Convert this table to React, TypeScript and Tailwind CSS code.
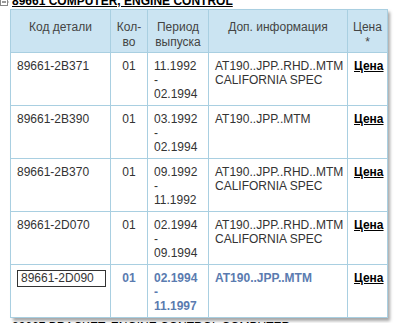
import React from 'react'

type Row = {
  code: string
  qty: string
  from: string
  to: string
  info: string[]
  active?: boolean
}

const rows: Row[] = [
  { code: '89661-2B371', qty: '01', from: '11.1992', to: '02.1994', info: ['AT190..JPP..RHD..MTM', 'CALIFORNIA SPEC'] },
  { code: '89661-2B390', qty: '01', from: '03.1992', to: '02.1994', info: ['AT190..JPP..MTM'] },
  { code: '89661-2B370', qty: '01', from: '09.1992', to: '11.1992', info: ['AT190..JPP..RHD..MTM', 'CALIFORNIA SPEC'] },
  { code: '89661-2D070', qty: '01', from: '02.1994', to: '09.1994', info: ['AT190..JPP..RHD..MTM', 'CALIFORNIA SPEC'] },
  { code: '89661-2D090', qty: '01', from: '02.1994', to: '11.1997', info: ['AT190..JPP..MTM'], active: true },
]

const TreeIcon = () => (
  <svg width="9" height="9" viewBox="0 0 9 9" className="shrink-0">
    <rect x="0.5" y="0.5" width="7" height="7" fill="white" stroke="#888" />
    <line x1="2" y1="4" x2="6" y2="4" stroke="#333" />
    <line x1="8" y1="4" x2="9" y2="4" stroke="#999" strokeDasharray="1 1" />
  </svg>
)

const App = () => {
  const th = 'border border-[#a9cfe1] font-normal text-[#444] text-center align-top px-[4px] pt-[10px] pb-[2px] leading-[15px]'
  const td = 'border border-[#a9cfe1] align-top pt-[6px] pb-[4px] leading-[14px]'

  return (
    <div className="w-[403px] h-[323px] overflow-hidden bg-white text-[12px] text-[#333]" style={{ fontFamily: '"Liberation Sans", Arial, sans-serif' }}>
      <div className="flex items-end gap-[3px] h-[8px] -mt-[1px] leading-[8px]">
        <div className="-mt-[4px]"><TreeIcon /></div>
        <span className="font-bold underline text-black leading-[8px] -translate-y-[2px]">89661 COMPUTER, ENGINE CONTROL</span>
      </div>

      <div className="ml-[10px] mt-[2px] w-[377px] shadow-[3px_3px_3px_rgba(0,0,0,0.35)]">
        <table className="w-[377px] border-collapse table-fixed">
          <colgroup>
            <col className="w-[100px]" />
            <col className="w-[37px]" />
            <col className="w-[61px]" />
            <col className="w-[139px]" />
            <col className="w-[40px]" />
          </colgroup>
          <thead>
            <tr className="bg-[#cbe4f2] h-[41px]">
              <th className={th}>Код детали</th>
              <th className={th}>Кол-<br />во</th>
              <th className={th}>Период выпуска</th>
              <th className={th}>Доп. информация</th>
              <th className={th}>Цена<br />*</th>
            </tr>
          </thead>
          <tbody>
            {rows.map((r, idx) => (
              <tr key={idx} className={r.active ? 'h-[52px]' : 'h-[52px]'}>
                <td className={`${td} pl-[6px]`}>
                  {r.active ? (
                    <div className="w-[89px] h-[17px] border border-[#333] pl-[3px] leading-[15px] -mt-[1px]">{r.code}</div>
                  ) : (
                    r.code
                  )}
                </td>
                <td className={`${td} text-center ${r.active ? 'font-bold text-[#5a7bb0]' : ''}`}>{r.qty}</td>
                <td className={`${td} pl-[6px] ${r.active ? 'font-bold text-[#5a7bb0]' : ''}`}>
                  {r.from}
                  <br />-<br />
                  {r.to}
                </td>
                <td className={`${td} pl-[6px] ${r.active ? 'font-bold text-[#5a7bb0]' : ''}`}>
                  {r.info.map((line, i) => (
                    <div key={i}>{line}</div>
                  ))}
                </td>
                <td className={`${td} pl-[6px]`}>
                  <span className="font-bold underline text-black">Цена</span>
                </td>
              </tr>
            ))}
          </tbody>
        </table>
      </div>

      <div className="flex items-center gap-[3px] mt-[2px] leading-[14px]">
        <TreeIcon />
        <span className="text-black">89667 BRACKET, ENGINE CONTROL COMPUTER</span>
      </div>
    </div>
  )
}

export default App
